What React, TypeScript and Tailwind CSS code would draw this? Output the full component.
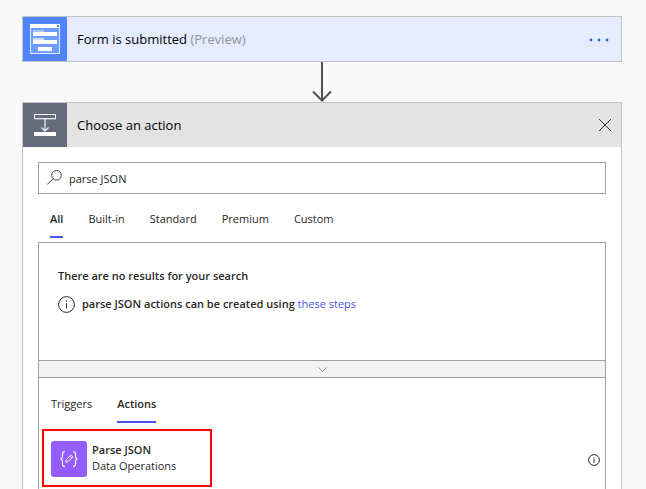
import { useState } from "react";

function FormIcon() {
  return (
    <svg width="44" height="44" viewBox="0 0 44 44" aria-hidden="true" className="shrink-0 bg-[#4f83ff]">
      <rect x="7.5" y="7.5" width="29" height="29" fill="#6d9dff" stroke="#dce8ff" />
      <rect x="7" y="7" width="30" height="4" fill="#fff" />
      <rect x="34" y="8" width="2" height="2" fill="#4f83ff" />
      <rect x="10" y="13" width="11" height="2" fill="#a9c6ff" />
      <rect x="10" y="15" width="24" height="4" fill="#fff" />
      <rect x="10" y="21" width="11" height="2" fill="#cfdfff" />
      <rect x="10" y="23" width="24" height="4" fill="#fff" />
      <rect x="15" y="30" width="14" height="4" fill="#fff" />
    </svg>
  );
}

function ActionIcon() {
  return (
    <svg width="44" height="44" viewBox="0 0 44 44" aria-hidden="true" className="shrink-0 bg-[#656d7c]">
      <path d="M11.5 11.5h21v4h-21z" fill="none" stroke="#fff" />
      <path d="M11 16h22" stroke="#c5c9cf" />
      <path d="M22 16v11.500M18.500 24.500 22 28l3.500-3.500" fill="none" stroke="#e2e4e8" strokeWidth="1.300" />
      <rect x="11" y="29" width="22" height="4" fill="#fff" />
    </svg>
  );
}

function InfoIcon({ size }: { size: number }) {
  return (
    <svg width={size} height={size} viewBox={`0 0 ${size} ${size}`} aria-hidden="true" className="shrink-0">
      <circle cx={size / 2} cy={size / 2} r={size / 2 - 0.6} fill="none" stroke="currentColor" />
      <path
        d={`M${size / 2} ${size * 0.27}v1.200M${size / 2} ${size * 0.42}V${size * 0.73}`}
        stroke="currentColor"
      />
    </svg>
  );
}

function Tab({ label, active, onClick }: { label: string; active: boolean; onClick: () => void }) {
  return (
    <button
      type="button"
      role="tab"
      aria-selected={active}
      onClick={onClick}
      className={`border-b-2 pb-[7px] text-[11px] leading-5 ${active ? "border-[#4a52f0] font-semibold" : "border-transparent"}`}
    >
      {label}
    </button>
  );
}

export default function App() {
  const [query, setQuery] = useState("parse JSON");
  const [category, setCategory] = useState("All");
  const [kind, setKind] = useState("Actions");

  return (
    <main className="flex min-h-screen flex-col bg-[#f8f8f8] pt-4 pr-6 pl-[22px] font-['Segoe_UI','Open_Sans','Noto_Sans',sans-serif] text-[#292827]">
      <section className="flex items-center border border-[#c4c4c4] bg-[#e5ecff] text-black">
        <FormIcon />
        <h2 className="ml-2.5 flex-1 text-[13px] leading-5">
          Form is submitted <span className="text-[#929292]">(Preview)</span>
        </h2>
        <button type="button" aria-label="More options" className="mr-2.5">
          <svg width="24" height="8" viewBox="0 0 24 8" fill="#2f62d0">
            <circle cx="4" cy="5" r="1.400" />
            <circle cx="12" cy="5" r="1.400" />
            <circle cx="20" cy="5" r="1.400" />
          </svg>
        </button>
      </section>

      <svg width="22" height="40" viewBox="0 0 22 40" aria-hidden="true" className="self-center" fill="none" stroke="#505050" strokeWidth="2">
        <path d="M11 0v38M2 29.500l9 9 9-9" />
      </svg>

      <section className="flex flex-1 flex-col border border-b-0 border-[#c4c4c4] bg-white">
        <header className="flex items-center bg-[#e3e3e3] text-black">
          <ActionIcon />
          <h2 className="ml-2.5 flex-1 text-[13px] leading-5">Choose an action</h2>
          <button type="button" aria-label="Close" className="mr-2.5">
            <svg width="12" height="12" viewBox="0 0 12 12" fill="none" stroke="#333">
              <path d="M0 0l12 12M12 0L0 12" />
            </svg>
          </button>
        </header>

        <div className="flex flex-1 flex-col px-[15px] pt-[15px]">
          <label className="flex h-8 items-center gap-[7px] border border-[#a0a0a0] pl-2">
            <svg width="15" height="16" viewBox="0 0 15 16" aria-label="Search" fill="none" stroke="#444">
              <circle cx="9.500" cy="5.300" r="4.800" />
              <path d="M6.100 8.700.2 14.600" />
            </svg>
            <input
              value={query}
              onChange={(e) => setQuery(e.target.value)}
              aria-label="Search connectors and actions"
              className="min-w-0 flex-1 bg-transparent pt-0.5 text-[11px] leading-5 outline-none"
            />
          </label>

          <div role="tablist" className="mt-[15px] flex gap-[25px] pl-3">
            {["All", "Built-in", "Standard", "Premium", "Custom"].map((name) => (
              <Tab key={name} label={name} active={category === name} onClick={() => setCategory(name)} />
            ))}
          </div>

          <div className="mt-1 flex flex-1 flex-col border border-b-0 border-[#a0a0a0]">
            <div className="h-[117px] pt-[23px] pl-[19px] text-[11px] leading-5 font-semibold">
              <p>There are no results for your search</p>
              <p className="mt-2 flex items-center gap-[7px]">
                <InfoIcon size={17} />
                <span>
                  parse JSON actions can be created using{" "}
                  <a href="#steps" className="font-normal text-[#4a52f0]">
                    these steps
                  </a>
                </span>
              </p>
            </div>
            <button
              type="button"
              aria-label="Expand results"
              className="flex h-[18px] items-center justify-center border-y border-[#a0a0a0] bg-[#f3f3f3]"
            >
              <svg width="9" height="5" viewBox="0 0 9 5" fill="none" stroke="#7e8f9c">
                <path d="M.5.5l4 4 4-4" />
              </svg>
            </button>

            <div role="tablist" className="mt-4 flex gap-[25px] pl-3">
              {["Triggers", "Actions"].map((name) => (
                <Tab key={name} label={name} active={kind === name} onClick={() => setKind(name)} />
              ))}
            </div>

            <div className="mt-1.5 flex items-center justify-between pr-[5px] pl-[3px]">
              <button
                type="button"
                className="flex h-[58px] w-[170px] items-center gap-[5px] border-2 border-[#ff0000] pl-[7px] text-left text-[11px] leading-4"
              >
                <svg width="36" height="36" viewBox="0 0 36 36" aria-hidden="true" className="mt-0.5 shrink-0 rounded-[3px] bg-[#955cff]" fill="none" stroke="#fff" strokeWidth="1.200">
                  <path d="M14 10.500c-2 0-2.500.8-2.500 2.500v2.500c0 1.500-.5 2.200-2 2.500 1.500.3 2 1 2 2.500V23c0 1.700.5 2.500 2.500 2.500M22 10.500c2 0 2.500.8 2.500 2.500v2.500c0 1.500.5 2.200 2 2.500-1.500.3-2 1-2 2.500V23c0 1.700-.5 2.500-2.500 2.500" />
                  <path d="M14.800 21.200l.7-2.500 4.700-4.700 1.800 1.800-4.700 4.700zM18.900 15.300l1.800 1.800" strokeWidth=".9" />
                </svg>
                <span>
                  <span className="block font-semibold">Parse JSON</span>
                  <span className="block">Data Operations</span>
                </span>
              </button>
              <button type="button" aria-label="About Parse JSON" className="pt-1">
                <InfoIcon size={12} />
              </button>
            </div>
          </div>
        </div>
      </section>
    </main>
  );
}
